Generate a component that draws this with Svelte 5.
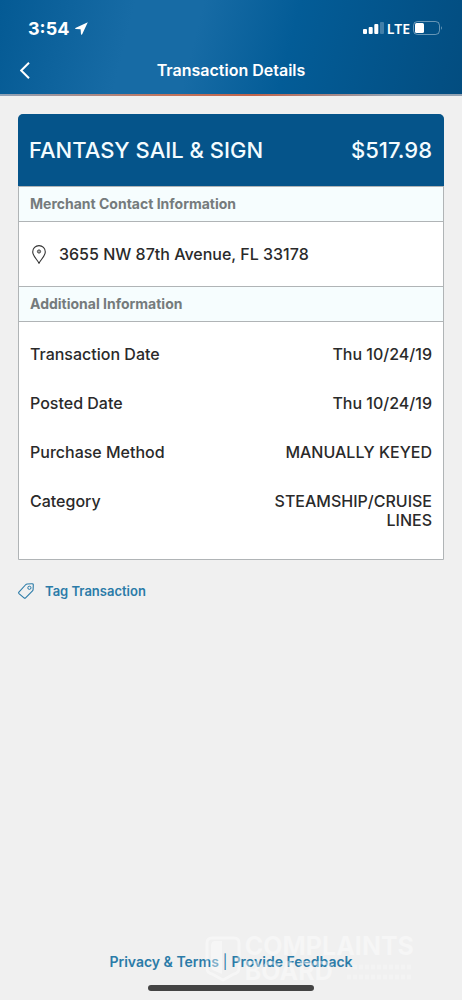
<script>
    const transaction = {
        merchant: "FANTASY SAIL & SIGN",
        amount: "$517.98",
        address: "3655 NW 87th Avenue, FL 33178",
    };

    const details = [
        { label: "Transaction Date", value: "Thu 10/24/19" },
        { label: "Posted Date", value: "Thu 10/24/19" },
        { label: "Purchase Method", value: "MANUALLY KEYED" },
        { label: "Category", value: "STEAMSHIP/CRUISE LINES" },
    ];
</script>

<div class="screen">
    <header>
        <div class="status">
            <span class="time">3:54</span>
            <svg class="location" width="13" height="13" viewBox="0 0 13 13" aria-hidden="true">
                <path d="M12.8 0.3 L0.4 5.9 Q-0.1 6.8 0.8 7.1 L5.6 7.3 L6 12.2 Q6.6 13.2 7.2 12.3 Z" fill="#fff" />
            </svg>
            <svg class="signal" width="21" height="12" viewBox="0 0 21 12" aria-hidden="true">
                <rect x="0" y="7" width="4" height="5" rx="1" fill="#fff" />
                <rect x="5.7" y="5" width="4" height="7" rx="1" fill="#fff" />
                <rect x="11.3" y="2" width="4" height="10" rx="1" fill="#fff" />
                <rect x="17" y="0" width="4" height="12" rx="1" fill="#fff" opacity="0.25" />
            </svg>
            <span class="network">LTE</span>
            <svg class="battery" width="30" height="14" viewBox="0 0 30 14" aria-hidden="true">
                <rect x="0.5" y="0.5" width="26" height="13" rx="4" fill="none" stroke="#fff" opacity="0.4" />
                <rect x="2" y="2" width="9" height="10" rx="1.5" fill="#fff" />
                <path d="M28 5 Q29.8 7 28 9 Z" fill="#fff" opacity="0.5" />
            </svg>
        </div>
        <nav>
            <button class="back" aria-label="Back">
                <svg width="10" height="17" viewBox="0 0 10 17" aria-hidden="true">
                    <path d="M9 0.8 L1.2 8.5 L9 16.2" fill="none" stroke="#fff" stroke-width="2" />
                </svg>
            </button>
            <h1>Transaction Details</h1>
        </nav>
    </header>

    <main>
        <article class="card">
            <div class="summary">
                <h2>{transaction.merchant}</h2>
                <span>{transaction.amount}</span>
            </div>
            <h3>Merchant Contact Information</h3>
            <div class="address">
                <svg width="14" height="19" viewBox="0 0 14 19" aria-hidden="true">
                    <path d="M7 18.2 C5.5 15 0.7 11 0.7 6.9 A6.3 6.3 0 0 1 13.3 6.9 C13.3 11 8.5 15 7 18.2 Z" fill="none" stroke="#333" stroke-width="1.1" />
                    <circle cx="7" cy="6.5" r="1.6" fill="#aaa" stroke="#444" stroke-width="1" />
                </svg>
                <span>{transaction.address}</span>
            </div>
            <h3>Additional Information</h3>
            <dl>
                {#each details as detail}
                    <div class="row">
                        <dt>{detail.label}</dt>
                        <dd>{detail.value}</dd>
                    </div>
                {/each}
            </dl>
        </article>

        <button class="tag">
            <svg width="16" height="16" viewBox="0 0 16 16" aria-hidden="true">
                <path d="M0.9 9.2 L7.4 2 Q8.2 1.1 9.3 1 L13.9 0.7 Q15.3 0.6 15.3 2 L15.1 6.5 Q15.1 7.3 14.5 7.9 L7.6 14.8 Q6.8 15.5 6 14.8 L1 10.6 Q0.3 9.9 0.9 9.2 Z" fill="none" stroke="#2b7ba8" stroke-width="1.1" />
                <circle cx="11.4" cy="4.8" r="1.6" fill="none" stroke="#2b7ba8" stroke-width="1" />
            </svg>
            Tag Transaction
        </button>
    </main>

    <footer>
        <div class="links">
            <a href="#privacy">Privacy &amp; Terms</a>
            <span>|</span>
            <a href="#feedback">Provide Feedback</a>
        </div>
        <div class="home"></div>
        <div class="watermark">
            <svg width="36" height="46" viewBox="0 0 36 46" aria-hidden="true">
                <path d="M7 2 H29 Q34 2 34 7 V32 Q34 37 29 38 L18 44 L7 38 Q2 37 2 32 V7 Q2 2 7 2 Z" fill="none" stroke="#fff" stroke-width="3" />
                <path d="M17 5 H10 Q6 5 6 10 V30 Q6 34 10 35 L17 38 Z" fill="#fff" />
            </svg>
            <div>
                <p>COMPLAINTS</p>
                <div class="second">
                    <p>BOARD</p>
                    <svg width="68" height="18" viewBox="0 0 68 18" aria-hidden="true">
                        <path d="M1 4 H67 M1 14 H67" stroke="#fff" stroke-width="5" stroke-dasharray="4 2" opacity="0.6" />
                    </svg>
                </div>
            </div>
        </div>
    </footer>
</div>

<style>
    :global(body) {
        margin: 0;
        background: #f0f0f0;
    }

    .screen {
        display: flex;
        flex-direction: column;
        min-height: 100vh;
        font-family: Inter, "Liberation Sans", sans-serif;
        color: #2a2a2a;
    }

    h1,
    h2,
    h3,
    p,
    dl,
    dd {
        margin: 0;
    }

    button {
        padding: 0;
        border: none;
        background: none;
        font: inherit;
        cursor: pointer;
    }

    header {
        position: relative;
        padding-bottom: 2px;
        color: #fff;
        background: linear-gradient(104deg, #045a94 0%, #176ba5 28%, #176ba5 42%, #035c97 62%, #034d80 100%);
    }

    header::after {
        content: "";
        position: absolute;
        inset: auto 0 0;
        height: 2px;
        background: linear-gradient(90deg, #8fa3b8, #c0755f 35%, #c0644c 55%, #93a3b3 85%);
    }

    .status {
        display: flex;
        align-items: center;
        height: 56px;
        padding: 0 19px 0 28px;
    }

    .time {
        font-size: 18px;
        font-weight: 700;
    }

    .location {
        margin-left: 6px;
    }

    .signal {
        margin-left: auto;
    }

    .network {
        margin: 0 3px;
        font-family: "Noto Sans", sans-serif;
        font-size: 14px;
        font-weight: 600;
    }

    nav {
        display: grid;
        grid-template-columns: 40px 1fr 40px;
        height: 38px;
    }

    .back {
        display: flex;
        align-items: center;
        height: 28px;
        padding-left: 20px;
    }

    h1 {
        font-size: 16px;
        font-weight: 600;
        line-height: 28px;
        text-align: center;
    }

    main {
        flex: 1;
        padding: 18px;
    }

    .card {
        border: 1px solid #b0b4b6;
        border-radius: 5px 5px 0 0;
        background: #fff;
    }

    .summary {
        display: flex;
        justify-content: space-between;
        align-items: center;
        height: 72px;
        margin: -1px -1px 0;
        padding: 0 12px 0 11px;
        border-radius: 5px 5px 0 0;
        background: #05548a;
        color: #f4fcff;
        font-size: 22px;
        font-weight: 500;
    }

    h2 {
        font-size: inherit;
        font-weight: inherit;
    }

    h3 {
        padding: 0 11px;
        border: solid #b0b4b6;
        border-width: 1px 0;
        background: #f6fdfe;
        color: #757b7c;
        font-size: 14px;
        font-weight: 700;
        line-height: 34px;
    }

    .address {
        display: flex;
        align-items: center;
        gap: 13px;
        height: 64px;
        padding: 0 13px;
        font-size: 16px;
        font-weight: 500;
    }

    dl {
        display: grid;
        gap: 30px;
        padding: 23px 11px 29px;
        font-size: 16px;
        font-weight: 500;
        line-height: 19px;
    }

    .row {
        display: flex;
        justify-content: space-between;
    }

    dd {
        max-width: 40%;
        text-align: right;
    }

    .tag {
        display: flex;
        align-items: center;
        gap: 11px;
        margin-top: 22px;
        color: #2b7ba8;
        font-size: 13px;
        font-weight: 600;
        line-height: 18px;
    }

    footer {
        position: relative;
        padding-bottom: 9px;
    }

    .links {
        display: flex;
        justify-content: center;
        gap: 4px;
        color: #2b7ba8;
        font-size: 14px;
        font-weight: 600;
        line-height: 18px;
    }

    a {
        color: inherit;
        text-decoration: none;
    }

    .links span {
        font-weight: 400;
    }

    .home {
        width: 36%;
        height: 6px;
        margin: 14px auto 0;
        border-radius: 3px;
        background: #444;
    }

    .watermark {
        position: absolute;
        right: 48px;
        bottom: 16px;
        display: flex;
        align-items: center;
        gap: 4px;
        color: #fff;
        font-size: 25px;
        font-weight: 700;
        line-height: 25px;
        opacity: 0.4;
        pointer-events: none;
    }

    .second {
        display: flex;
        align-items: center;
        justify-content: space-between;
    }
</style>
